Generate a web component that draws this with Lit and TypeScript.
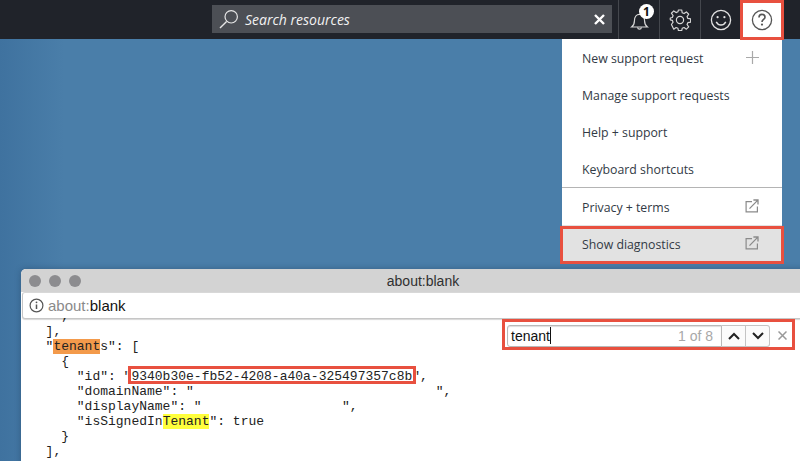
import { LitElement, html, css } from "lit";
import { customElement } from "lit/decorators.js";

const ext = html`<svg class="ext" width="14" height="14" viewBox="0 0 14 14" fill="none" stroke="#8a8a8a" stroke-width="1.2"><path d="M7 2.6H1.1v10.3h11.3V7.4"/><path d="M4.5 9.6 12.6 1.4M8.4 1h4.6v4.6" stroke-width="1.3"/></svg>`;

@customElement("app-root")
export class AppRoot extends LitElement {
  static styles = css`
    :host { display: block; width: 800px; height: 461px; position: relative; overflow: hidden;
      background: linear-gradient(90deg, #3f729f 0%, #4a7ea9 8%, #4a7ea9 100%); font-family: "Open Sans", sans-serif; }
    .top { height: 39px; background: #20232a; display: flex; align-items: stretch; padding-left: 212px; box-sizing: border-box; }
    .search { width: 400px; height: 28px; margin-top: 5px; background: #4c4f55; display: flex; align-items: center; box-sizing: border-box; padding: 0 7px; color: #f2f2f2; }
    .search .ph { font-style: italic; font-size: 14px; margin-left: 6px; flex: 1; }
    .search .x { display: flex; }
    .tool { width: 41px; display: flex; align-items: center; justify-content: center; border-left: 1px solid #44474d; box-sizing: border-box; position: relative; }
    .tool.first { margin-left: 6px; }
    .tool.help { background: #fff; border-left: none; }
    .badge { position: absolute; left: 20px; top: 4px; width: 15px; height: 15px; border-radius: 50%; background: #fff; color: #111; font: bold 12px/15px "Open Sans", sans-serif; text-align: center; }
    .menu { position: absolute; left: 562px; top: 39px; width: 220px; background: #fff; color: #323a45; font-size: 12.3px; }
    .item { height: 37px; display: flex; align-items: center; justify-content: space-between; padding: 2px 23px 0 20px; box-sizing: border-box; }
    .item svg { margin-top: -2px; }
    .item.sep { border-top: 1px solid #b4b4b4; height: 38px; }
    .item.sel { background: #e2e2e2; }
    .item.sep .ext, .item.sel .ext { margin-top: -4px; }
    .hl { position: absolute; border: 3px solid #e8503f; box-sizing: border-box; pointer-events: none; }
    .hl.help { left: 740px; top: 0; width: 44px; height: 40px; }
    .hl.diag { left: 560px; top: 226px; width: 224px; height: 38px; }
    .hl.findbox { left: 502px; top: 319px; width: 293px; height: 31px; }
    .hl.guid { left: 128px; top: 366px; width: 288px; height: 18px; }
    .win { position: absolute; left: 21px; top: 269px; width: 790px; height: 200px; background: #fff; border-radius: 5px 5px 0 0; box-shadow: 0 0 6px rgba(20,40,70,.35); overflow: hidden; display: flex; flex-direction: column; }
    .title { height: 23px; background: #d3d3d3; display: flex; align-items: center; position: relative; padding-left: 8px; gap: 8px; flex: none; }
    .dot { width: 12px; height: 12px; border-radius: 50%; background: #8c8c8f; }
    .title span { position: absolute; left: 0; width: 804px; text-align: center; font: 14px "Liberation Sans", sans-serif; color: #303030; }
    .addr { height: 27px; margin-left: 1px; border: 1px solid #c6c6c6; border-top-color: #d8d8d8; border-radius: 3px 0 0 3px; background: #fff; display: flex; align-items: center; padding-left: 6px; gap: 4px; font: 15px "Liberation Sans", sans-serif; flex: none; box-sizing: border-box; box-shadow: 0 1px 1px #d8d8d8; }
    .addr .g { color: #8a8a8a; }
    .addr .b { color: #111; }
    pre { margin: -10px 0 0; padding: 0 0 0 9px; font: 13px/15px "Liberation Mono", monospace; color: #222; flex: none; }
    .o { background: #f39a4b; }
    .y { background: #ffff3c; }
    .find { position: absolute; left: 503px; top: 322px; width: 291px; height: 27px; background: #fff; display: flex; align-items: center; box-sizing: border-box; font: 14px "Liberation Sans", sans-serif; }
    .field { width: 215px; height: 22px; border: 1px solid #b9b9b9; border-radius: 3px 0 0 3px; box-sizing: border-box; display: flex; align-items: center; padding: 0 8px 0 3px; margin-left: 4px; color: #111; box-shadow: inset 0 1px 1px #ddd; }
    .caret { width: 1px; height: 17px; background: #111; }
    .field .n { margin-left: auto; color: #a8a8a8; }
    .btn { width: 24px; height: 22px; border: 1px solid #c4c4c4; border-left: none; box-sizing: border-box; display: flex; align-items: center; justify-content: center; background: #fbfbfb; }
    .btn.last { border-radius: 0 3px 3px 0; }
    .close { margin-left: 8px; display: flex; }
  `;

  render() {
    return html`
      <div class="top">
        <div class="search">
          <svg width="20" height="20" viewBox="0 0 20 20" fill="none" stroke="#e6e6e6" stroke-width="1.2"><circle cx="12.2" cy="7.8" r="6.2"/><path d="M7.6 12.4 1 19" stroke-width="1.4"/></svg>
          <span class="ph">Search resources</span>
          <span class="x"><svg width="11" height="11" viewBox="0 0 11 11" stroke="#fff" stroke-width="2.4"><path d="M1 1l9 9M10 1l-9 9"/></svg></span>
        </div>
        <div class="tool first">
          <svg width="19" height="21" viewBox="0 0 24 26" fill="none" stroke="#d8d8d8" stroke-width="1.5"><path d="M2 22.5c2.6-2 3.6-4 3.6-8 0-4.5 2.6-8 6.4-8s6.4 3.5 6.4 8c0 4 1 6 3.6 8z"/><path d="M9.5 23c.3 1.5 1.2 2.2 2.5 2.2s2.2-.7 2.5-2.2"/></svg>
          <span class="badge">1</span>
        </div>
        <div class="tool">
          <svg width="22" height="22" viewBox="0 0 22 22" fill="none" stroke="#d8d8d8" stroke-width="1.2"><circle cx="11" cy="11" r="3.6"/><path d="M9.3 1h3.4l.5 2.9 1.9.8 2.4-1.7 2.4 2.4-1.7 2.4.8 1.9 2.9.5v3.4l-2.9.5-.8 1.9 1.7 2.4-2.4 2.4-2.4-1.7-1.9.8-.5 2.4H9.3l-.5-2.4-1.9-.8-2.4 1.7L2.1 16l1.7-2.4-.8-1.9L.9 11.2V9.3l2.1-.5.8-1.9L2.1 4.4l2.4-2.4 2.4 1.7 1.9-.8z" stroke-linejoin="round" transform="translate(.4 0) scale(.97)"/></svg>
        </div>
        <div class="tool">
          <svg width="22" height="22" viewBox="0 0 22 22" fill="none" stroke="#e2e2e2" stroke-width="1.3"><circle cx="11" cy="11" r="9.6"/><path d="M6.2 12.8c1.2 2.2 2.8 3.2 4.8 3.2s3.6-1 4.8-3.2" stroke-width="1.4"/><circle cx="7.6" cy="8.2" r="1.1" fill="#e2e2e2" stroke="none"/><circle cx="14.4" cy="8.2" r="1.1" fill="#e2e2e2" stroke="none"/></svg>
        </div>
        <div class="tool help">
          <svg width="22" height="22" viewBox="0 0 22 22" fill="none" stroke="#555" stroke-width="1.3"><circle cx="11" cy="11" r="9.6"/><path d="M8 8.4c0-1.8 1.3-3 3-3s3 1.2 3 2.8c0 2.3-3 2.3-3 4.8" stroke-width="1.6"/><circle cx="11" cy="15.6" r="1.1" fill="#555" stroke="none"/></svg>
        </div>
      </div>

      <div class="menu">
        <div class="item">New support request
          <svg width="13" height="13" viewBox="0 0 13 13" stroke="#a9a9a9" stroke-width="1.2"><path d="M6.5 0v13M0 6.5h13"/></svg></div>
        <div class="item">Manage support requests</div>
        <div class="item">Help + support</div>
        <div class="item">Keyboard shortcuts</div>
        <div class="item sep">Privacy + terms ${ext}</div>
        <div class="item sel">Show diagnostics ${ext}</div>
      </div>

      <div class="win">
        <div class="title"><i class="dot"></i><i class="dot"></i><i class="dot"></i><span>about:blank</span></div>
        <div class="addr">
          <svg width="15" height="15" viewBox="0 0 15 15" fill="none" stroke="#555" stroke-width="1.2"><circle cx="7.5" cy="7.5" r="6.4"/><path d="M7.5 6.6v4.4" stroke-width="1.5"/><circle cx="7.5" cy="4.3" r=".9" fill="#555" stroke="none"/></svg>
          <span><span class="g">about:</span><span class="b">blank</span></span>
        </div>
        <pre>    ,
  ],
  "<span class="o">tenant</span>s": [
    {
      "id": "9340b30e-fb52-4208-a40a-325497357c8b",
      "domainName": "                               ",
      "displayName": "                  ",
      "isSignedIn<span class="y">Tenant</span>": true
    }
  ],</pre>
      </div>

      <div class="find">
        <div class="field">tenant<i class="caret"></i><span class="n">1 of 8</span></div>
        <div class="btn"><svg width="12" height="8" viewBox="0 0 12 8" fill="none" stroke="#222" stroke-width="2"><path d="M1 7l5-5 5 5"/></svg></div>
        <div class="btn last"><svg width="12" height="8" viewBox="0 0 12 8" fill="none" stroke="#222" stroke-width="2"><path d="M1 1l5 5 5-5"/></svg></div>
        <span class="close"><svg width="9" height="9" viewBox="0 0 9 9" stroke="#999" stroke-width="1.5"><path d="M.5.5l8 8M8.5.5l-8 8"/></svg></span>
      </div>

      <div class="hl help"></div>
      <div class="hl diag"></div>
      <div class="hl findbox"></div>
      <div class="hl guid"></div>
    `;
  }
}
